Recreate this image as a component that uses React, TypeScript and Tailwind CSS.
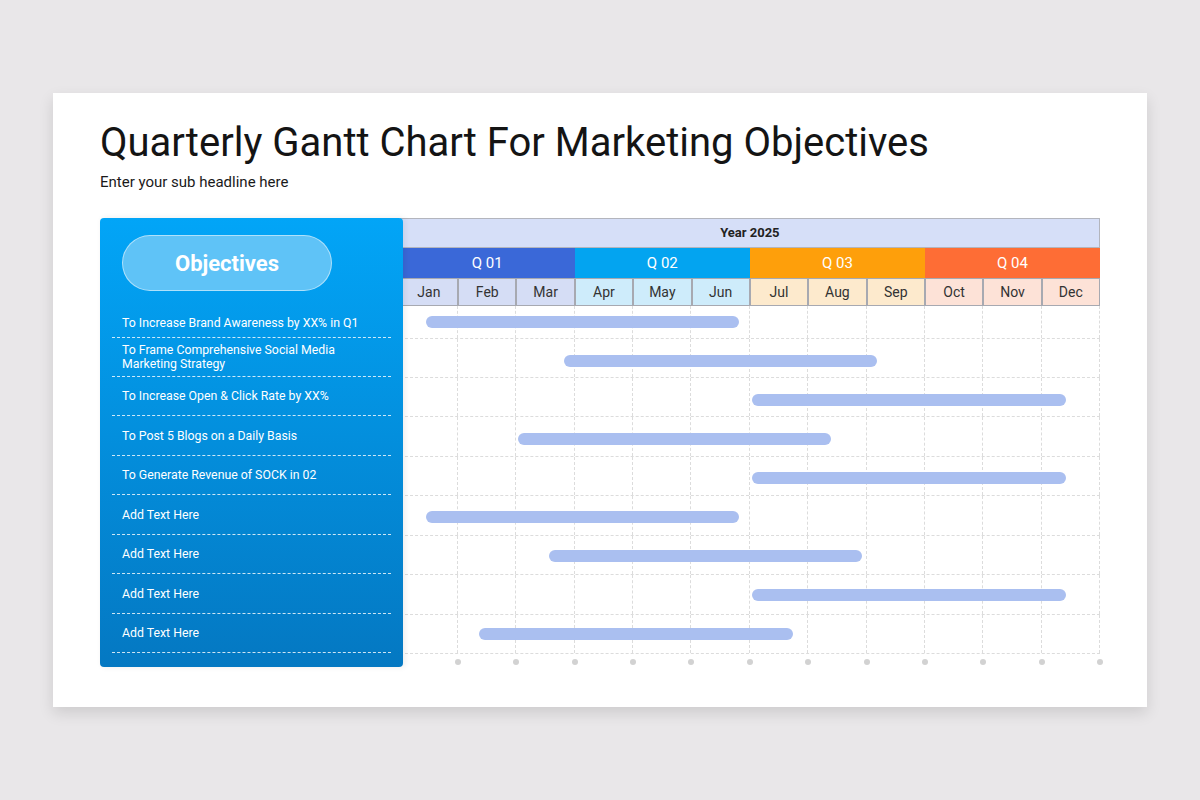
import React from "react";

interface Objective {
  label: React.ReactNode;
  start: number;
  width: number;
  top: number;
}

const objectives: Objective[] = [
  { label: "To Increase Brand Awareness by XX% in Q1", start: 26, width: 313, top: 10 },
  {
    label: (
      <>
        To Frame Comprehensive Social Media
        <br />
        Marketing Strategy
      </>
    ),
    start: 164,
    width: 313,
    top: 16,
  },
  { label: "To Increase Open & Click Rate by XX%", start: 352, width: 314, top: 16 },
  { label: "To Post 5 Blogs on a Daily Basis", start: 118, width: 313, top: 16 },
  { label: "To Generate Revenue of SOCK in 02", start: 352, width: 314, top: 15 },
  { label: "Add Text Here", start: 26, width: 313, top: 15 },
  { label: "Add Text Here", start: 149, width: 313, top: 14 },
  { label: "Add Text Here", start: 352, width: 314, top: 14 },
  { label: "Add Text Here", start: 79, width: 314, top: 13 },
];

const rowHeights = ["h-[33px]", "h-[39px]", "h-[39px]", "h-[40px]", "h-[39px]", "h-[40px]", "h-[39px]", "h-[40px]", "h-[39px]"];

const quarters = [
  { name: "Q 01", bg: "bg-[#3a68d8]", monthBg: "bg-[#d5ddf5]", months: ["Jan", "Feb", "Mar"] },
  { name: "Q 02", bg: "bg-[#03a4f0]", monthBg: "bg-[#ceecfb]", months: ["Apr", "May", "Jun"] },
  { name: "Q 03", bg: "bg-[#fe9f0b]", monthBg: "bg-[#fdeacd]", months: ["Jul", "Aug", "Sep"] },
  { name: "Q 04", bg: "bg-[#fe6d35]", monthBg: "bg-[#fde2d7]", months: ["Oct", "Nov", "Dec"] },
];

const months = Array.from({ length: 12 }, (_, i) => i);

export default function App() {
  return (
    <div
      className="min-h-[800px] w-full bg-[#e9e7e9] pt-[93px]"
      style={{ fontFamily: "Roboto, 'Liberation Sans', sans-serif" }}
    >
      <div className="mx-[53px] h-[614px] bg-white px-[47px] pt-[26px] shadow-[0_6px_14px_rgba(0,0,0,0.12)]">
        {/* Header */}
        <h1 className="text-[40px] leading-[48px] text-[#141414]">
          Quarterly Gantt Chart For Marketing Objectives
        </h1>
        <p className="mt-[5px] text-[15px] leading-[20px] text-[#1a1a1a]">Enter your sub headline here</p>

        {/* Chart */}
        <div className="mt-[26px] flex">
          {/* Objectives panel */}
          <div className="relative z-10 w-[303px] rounded-[4px] bg-gradient-to-b from-[#02a5f7] to-[#0478c2] pb-[14px] pt-[17px] shadow-[2px_0_6px_rgba(0,0,0,0.08)]">
            <div className="ml-[22px] flex h-[56px] w-[210px] items-center justify-center rounded-full border border-white/50 bg-[#5fc3f7]">
              <span className="text-[22px] font-bold text-white">Objectives</span>
            </div>
            <div className="mt-[14px]">
              {objectives.map((o, i) => (
                <div
                  key={i}
                  className={`${rowHeights[i]} mx-[12px] flex items-center border-b border-dashed border-white/80 pl-[10px] text-[12.3px] leading-[14px] text-white`}
                >
                  <span className={i === 0 ? "mt-[4px]" : ""}>{o.label}</span>
                </div>
              ))}
            </div>
          </div>

          {/* Timeline */}
          <div className="ml-[-3px] w-[701px]">
            <div className="flex h-[30px] items-center justify-center border border-[#b3b5bd] bg-[#d6dff8] text-[13px] font-bold text-[#222]">
              Year 2025
            </div>
            <div className="flex">
              {quarters.map((q) => (
                <div key={q.name} className="flex-1">
                  <div className={`flex h-[30px] items-center justify-center text-[15px] text-white ${q.bg}`}>
                    {q.name}
                  </div>
                  <div className="flex">
                    {q.months.map((m) => (
                      <div
                        key={m}
                        className={`flex h-[28px] flex-1 items-center justify-center border border-[#a7a9b1] text-[14px] text-[#333] ${q.monthBg}`}
                      >
                        {m}
                      </div>
                    ))}
                  </div>
                </div>
              ))}
            </div>

            {objectives.map((o, i) => (
              <div key={i} className={`relative ${rowHeights[i]}`}>
                <div className="grid h-full grid-cols-12 border-b border-dashed border-[#dcdcdc]">
                  {months.map((m) => (
                    <div key={m} className="border-r border-dashed border-[#dcdcdc]" />
                  ))}
                </div>
                <div
                  className="absolute h-[12px] rounded-full bg-[#aabff0]"
                  style={{ left: o.start, width: o.width, top: o.top }}
                />
              </div>
            ))}

            <div className="mt-[5px] grid grid-cols-12">
              {months.map((m) => (
                <div key={m} className="flex justify-end">
                  <span className="mr-[-3px] h-[6px] w-[6px] rounded-full bg-[#d2d2d2]" />
                </div>
              ))}
            </div>
          </div>
        </div>
      </div>
    </div>
  );
}
